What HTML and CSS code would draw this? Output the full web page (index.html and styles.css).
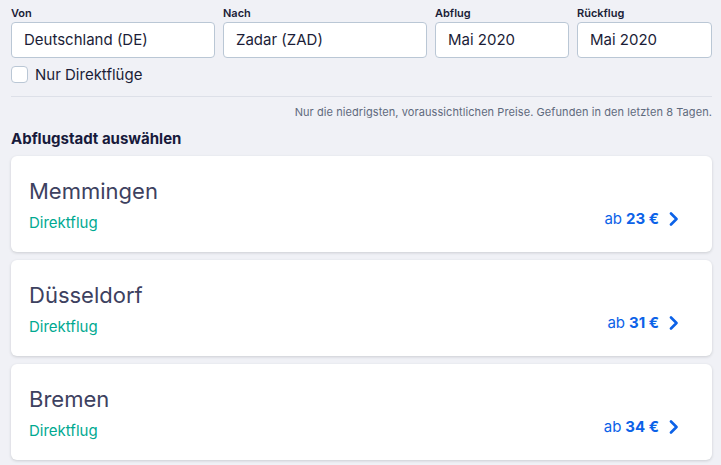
FILE: index.html
```html
<!DOCTYPE html>
<html lang="de">
<head>
<meta charset="utf-8">
<link rel="stylesheet" href="styles.css">
</head>
<body>
<div class="page">
  <div class="fields">
    <div class="field">
      <label class="field-label">Von</label>
      <div class="input">Deutschland (DE)</div>
    </div>
    <div class="field">
      <label class="field-label">Nach</label>
      <div class="input">Zadar (ZAD)</div>
    </div>
    <div class="field">
      <label class="field-label">Abflug</label>
      <div class="input">Mai 2020</div>
    </div>
    <div class="field">
      <label class="field-label">Rückflug</label>
      <div class="input">Mai 2020</div>
    </div>
  </div>
  <div class="check-row">
    <span class="checkbox"></span>
    <span class="check-label">Nur Direktflüge</span>
  </div>
  <hr class="divider">
  <p class="note">Nur die niedrigsten, voraussichtlichen Preise. Gefunden in den letzten 8 Tagen.</p>
  <h2 class="heading">Abflugstadt auswählen</h2>
  <div class="cards">
    <div class="card">
      <div class="card-left">
        <div class="city">Memmingen</div>
        <div class="direct">Direktflug</div>
      </div>
      <div class="price">ab <b>23 €</b>
        <svg class="chev" width="10" height="14" viewBox="0 0 10 14"><path d="M2 1.5 L7.5 7 L2 12.5" fill="none" stroke="#0c62e8" stroke-width="2.6" stroke-linecap="round" stroke-linejoin="round"/></svg>
      </div>
    </div>
    <div class="card">
      <div class="card-left">
        <div class="city">Düsseldorf</div>
        <div class="direct">Direktflug</div>
      </div>
      <div class="price">ab <b>31 €</b>
        <svg class="chev" width="10" height="14" viewBox="0 0 10 14"><path d="M2 1.5 L7.5 7 L2 12.5" fill="none" stroke="#0c62e8" stroke-width="2.6" stroke-linecap="round" stroke-linejoin="round"/></svg>
      </div>
    </div>
    <div class="card">
      <div class="card-left">
        <div class="city">Bremen</div>
        <div class="direct">Direktflug</div>
      </div>
      <div class="price">ab <b>34 €</b>
        <svg class="chev" width="10" height="14" viewBox="0 0 10 14"><path d="M2 1.5 L7.5 7 L2 12.5" fill="none" stroke="#0c62e8" stroke-width="2.6" stroke-linecap="round" stroke-linejoin="round"/></svg>
      </div>
    </div>
  </div>
</div>
</body>
</html>
```
FILE: styles.css
```css
* { box-sizing: border-box; }
html, body { margin: 0; padding: 0; }
body {
  background: #f0f1f6;
  font-family: Inter, "Noto Sans", sans-serif;
  color: #1b1d37;
  width: 721px;
  height: 465px;
  overflow: hidden;
}
.page { padding: 6px 9px 0 11px; }
.fields {
  display: grid;
  grid-template-columns: 204px 204px 134px 1fr;
  gap: 8px;
}
.field { display: flex; flex-direction: column; }
.field-label {
  font-size: 11px;
  font-weight: 600;
  line-height: 14px;
  height: 14px;
  margin-bottom: 2px;
  color: #1b1d37;
}
.input {
  height: 36px;
  border: 1px solid #bac7d5;
  border-radius: 4px;
  background: #fff;
  font-size: 15px;
  line-height: 34px;
  padding-left: 12px;
  color: #1b1d37;
}
.check-row {
  display: flex;
  align-items: center;
  gap: 7px;
  margin-top: 8px;
  height: 17px;
}
.checkbox {
  width: 17px;
  height: 17px;
  border: 1px solid #bac7d5;
  border-radius: 4px;
  background: #fff;
}
.check-label { font-size: 15px; color: #1b1d37; }
.divider {
  border: 0;
  border-top: 1px solid #dde0e8;
  margin: 13px 0 0 0;
}
.note {
  margin: 8px 0 0 0;
  text-align: right;
  font-size: 11px;
  line-height: 14px;
  letter-spacing: 0.08px;
  color: #5f6a7d;
}
.heading {
  margin: 10px 0 0 0;
  font-size: 15px;
  line-height: 20px;
  font-weight: 700;
  color: #171a3b;
}
.cards {
  display: flex;
  flex-direction: column;
  gap: 8px;
  margin-top: 7px;
}
.card {
  height: 96px;
  background: #fff;
  border-radius: 6px;
  box-shadow: 0 1px 3px rgba(37, 42, 49, 0.18);
  display: flex;
  justify-content: space-between;
  align-items: flex-end;
  padding: 0 33px 19px 18px;
}
.card-left { display: flex; flex-direction: column; }
.city {
  font-size: 22px;
  line-height: 28px;
  color: #3d4160;
  margin-bottom: 8px;
}
.direct {
  font-size: 15px;
  line-height: 20px;
  color: #00a991;
}
.price {
  display: flex;
  align-items: center;
  gap: 4px;
  font-size: 15px;
  line-height: 20px;
  color: #0c62e8;
  margin-bottom: 4px;
}
.price b { font-weight: 700; }
.chev { margin-left: 6px; }
```
